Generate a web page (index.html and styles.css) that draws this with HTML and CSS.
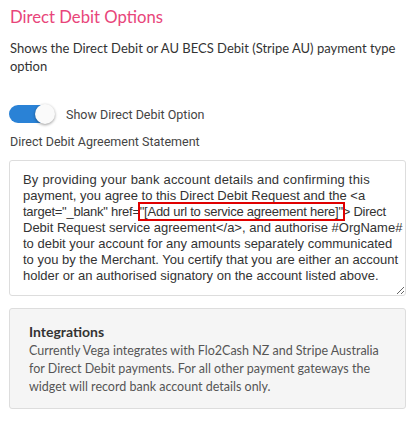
FILE: index.html
```
<!DOCTYPE html>
<html>
<head>
<meta charset="utf-8">
<link rel="stylesheet" href="styles.css">
</head>
<body>
<div class="panel">
  <h2 class="title">Direct Debit Options</h2>
  <p class="desc">Shows the Direct Debit or AU BECS Debit (Stripe AU) payment type option</p>
  <label class="toggle-row">
    <span class="switch"><span class="knob"></span></span>
    <span class="toggle-label">Show Direct Debit Option</span>
  </label>
  <div class="field-label">Direct Debit Agreement Statement</div>
  <div class="textarea"><span class="ln wide">By providing your bank account details and confirming this</span><span class="ln">payment, you agree to this Direct Debit Request and the &lt;a</span><span class="ln tight">target="_blank" href=<span class="mark">"[Add url to service agreement here]"</span>&gt; Direct</span><span class="ln">Debit Request service agreement&lt;/a&gt;, and authorise #OrgName#</span><span class="ln">to debit your account for any amounts separately communicated</span><span class="ln">to you by the Merchant. You certify that you are either an account</span><span class="ln">holder or an authorised signatory on the account listed above.</span></div>
  <div class="info">
    <div class="info-title">Integrations</div>
    <div class="info-text">Currently Vega integrates with Flo2Cash NZ and Stripe Australia for Direct Debit payments. For all other payment gateways the widget will record bank account details only.</div>
  </div>
</div>
</body>
</html>
```
FILE: styles.css
```
html, body {
  margin: 0;
  padding: 0;
  background: #fff;
}
.panel {
  padding: 7px 12px 0 9px;
  width: 397px;
  font-family: Lato, sans-serif;
  color: #333;
}
.title {
  margin: 0 0 0 1px;
  font-size: 16.7px;
  font-weight: 400;
  line-height: 20px;
  color: #e8457a;
}
.desc {
  margin: 12px 0 0 1px;
  font-size: 13px;
  line-height: 18px;
  color: #333;
}
.toggle-row {
  display: flex;
  align-items: center;
  gap: 11px;
  margin-top: 29px;
  height: 20px;
}
.switch {
  position: relative;
  width: 46px;
  height: 20px;
  display: block;
}
.switch::before {
  content: "";
  position: absolute;
  left: 0;
  top: 1px;
  width: 41px;
  height: 18px;
  border-radius: 9px;
  background: #2a82d6;
}
.knob {
  position: absolute;
  right: 0;
  top: 0;
  width: 20px;
  height: 20px;
  border-radius: 50%;
  background: #fafafa;
  box-shadow: 0 1px 3px rgba(0,0,0,0.4);
}
.toggle-label {
  font-family: Roboto, sans-serif;
  font-size: 12.5px;
  color: #444;
}
.field-label {
  font-family: Roboto, sans-serif;
  font-size: 12.5px;
  color: #444;
  margin: 10px 0 0 1px;
  line-height: 16px;
}
.textarea {
  margin-top: 10px;
  border: 1px solid #ddd;
  border-radius: 3px;
  padding: 11px 13px 7px 13px;
  font-family: "Liberation Sans", Arial, sans-serif;
  font-size: 13px;
  line-height: 16px;
  color: #333;
  height: 116px;
  resize: vertical;
  overflow: hidden;
  display: flex;
  flex-direction: column;
}
.ln {
  display: block;
  white-space: nowrap;
}
.wide {
  letter-spacing: 0.2px;
}
.tight {
  letter-spacing: -0.25px;
}
.mark {
  outline: 2px solid #e00000;
  outline-offset: 0;
}
.info {
  margin-top: 12px;
  background: #f5f5f5;
  border: 1px solid #ddd;
  border-radius: 3px;
  padding: 13px 19px 12px 19px;
}
.info-title {
  font-size: 14px;
  font-weight: 700;
  line-height: 20px;
  color: #333;
}
.info-text {
  font-size: 12.5px;
  line-height: 18px;
  color: #555;
}
```
